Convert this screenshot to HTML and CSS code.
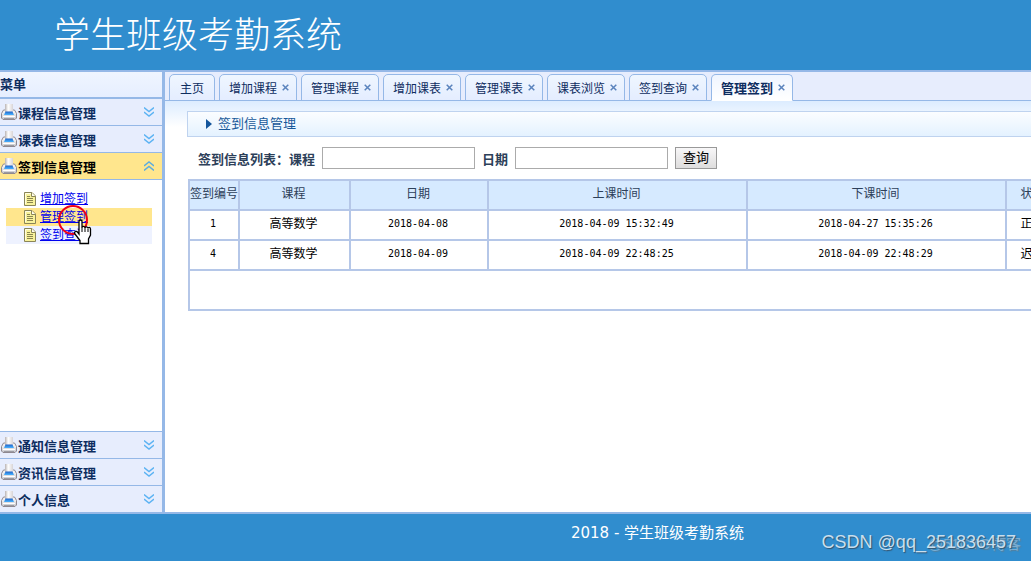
FILE: index.html
```html
<!DOCTYPE html>
<html lang="zh-CN">
<head>
<meta charset="utf-8">
<title>学生班级考勤系统</title>
<link rel="stylesheet" href="styles.css">
</head>
<body>
<svg class="defs" aria-hidden="true">
  <defs>
    <linearGradient id="paper" x1="0" y1="0" x2="1" y2="0"><stop offset="0" stop-color="#b9b3b3"/><stop offset=".4" stop-color="#fff"/><stop offset="1" stop-color="#d8d4d6"/></linearGradient>
    <linearGradient id="tray" x1="0" y1="0" x2="0" y2="1"><stop offset="0" stop-color="#1f62c8"/><stop offset="1" stop-color="#49b4ff"/></linearGradient>
    <linearGradient id="case" x1="0" y1="0" x2="0" y2="1"><stop offset="0" stop-color="#fff"/><stop offset="1" stop-color="#c6c6cc"/></linearGradient>
    <symbol id="printer" viewBox="0 0 16 16">
      <path d="M2.500 6l-2 3.500v4.500l1.500 1.500h12l1.500-1.500V9.500L13.500 6z" fill="url(#case)" stroke="#8e8890"/>
      <path d="M4 0h8v8H4z" fill="url(#paper)"/>
      <path d="M4.500 7.500h7L13 11H3z" fill="url(#tray)"/>
      <path d="M2 12.500h12" stroke="#fff"/>
      <path d="M3 14.500h10" stroke="#9b9ba2"/>
    </symbol>
    <symbol id="down" viewBox="0 0 10 10"><path d="M0 .5l5 4 5-4M0 5l5 4 5-4" fill="none" stroke="#5cb3f3" stroke-width="1.400"/></symbol>
    <symbol id="up" viewBox="0 0 10 10"><path d="M0 5l5-4 5 4M0 9.500l5-4 5 4" fill="none" stroke="#5cace0" stroke-width="1.400"/></symbol>
    <symbol id="note" viewBox="0 0 12 14">
      <path d="M.5.5h7.500l3.500 3.500v9.500H.5z" fill="#f8f29a" stroke="#8a8558"/>
      <path d="M1.500 12V1.500H7" fill="none" stroke="#fffde0"/>
      <path d="M7.500.5v4h4" fill="#fffef0" stroke="#8a8558"/>
      <path d="M3 4.500h3M3 6.500h6M3 8.500h6M3 10.500h6" stroke="#8a8550"/>
    </symbol>
    <symbol id="cross" viewBox="0 0 7 7"><path d="M.7.7l5.600 5.600M6.300.7L.7 6.300" stroke="#5a83bd" stroke-width="1.500"/></symbol>
  </defs>
</svg>
<div class="app">
  <header class="header"><h1 class="brand">学生班级考勤系统</h1></header>
  <div class="middle">
    <aside class="sidebar">
      <h2 class="side-title">菜单</h2>
      <button class="group"><svg class="printer"><use href="#printer"/></svg><span class="group-name">课程信息管理</span><svg class="chevron"><use href="#down"/></svg></button>
      <button class="group"><svg class="printer"><use href="#printer"/></svg><span class="group-name">课表信息管理</span><svg class="chevron"><use href="#down"/></svg></button>
      <button class="group open"><svg class="printer"><use href="#printer"/></svg><span class="group-name">签到信息管理</span><svg class="chevron"><use href="#up"/></svg></button>
      <ul class="submenu">
        <li class="sub"><svg class="note"><use href="#note"/></svg><a href="#add">增加签到</a></li>
        <li class="sub active"><svg class="note"><use href="#note"/></svg><a href="#manage">管理签到</a></li>
        <li class="sub alt"><svg class="note"><use href="#note"/></svg><a href="#query">签到查询</a></li>
      </ul>
      <div class="lower">
        <button class="group"><svg class="printer"><use href="#printer"/></svg><span class="group-name">通知信息管理</span><svg class="chevron"><use href="#down"/></svg></button>
        <button class="group"><svg class="printer"><use href="#printer"/></svg><span class="group-name">资讯信息管理</span><svg class="chevron"><use href="#down"/></svg></button>
        <button class="group"><svg class="printer"><use href="#printer"/></svg><span class="group-name">个人信息</span><svg class="chevron"><use href="#down"/></svg></button>
      </div>
    </aside>
    <main class="main">
      <nav class="tabs">
        <button class="tab">主页</button>
        <button class="tab">增加课程<svg class="cross"><use href="#cross"/></svg></button>
        <button class="tab">管理课程<svg class="cross"><use href="#cross"/></svg></button>
        <button class="tab">增加课表<svg class="cross"><use href="#cross"/></svg></button>
        <button class="tab">管理课表<svg class="cross"><use href="#cross"/></svg></button>
        <button class="tab">课表浏览<svg class="cross"><use href="#cross"/></svg></button>
        <button class="tab">签到查询<svg class="cross"><use href="#cross"/></svg></button>
        <button class="tab current">管理签到<svg class="cross"><use href="#cross"/></svg></button>
      </nav>
      <section class="page">
        <h2 class="page-title"><svg class="arrow" viewBox="0 0 6 10"><path d="M0 0l6 5-6 5z" fill="#14569c"/></svg>签到信息管理</h2>
        <form class="search">
          <label for="course">签到信息列表：课程</label>
          <input class="field" id="course" type="text">
          <label for="date">日期</label>
          <input class="field" id="date" type="text">
          <button class="submit" type="button">查询</button>
        </form>
        <table class="records">
          <colgroup><col class="c-id"><col class="c-course"><col class="c-date"><col class="c-time"><col class="c-time"><col class="c-state"></colgroup>
          <thead>
            <tr><th>签到编号</th><th>课程</th><th>日期</th><th>上课时间</th><th>下课时间</th><th>状态</th></tr>
          </thead>
          <tbody>
            <tr><td class="num">1</td><td>高等数学</td><td class="num">2018-04-08</td><td class="num">2018-04-09 15:32:49</td><td class="num">2018-04-27 15:35:26</td><td>正常</td></tr>
            <tr><td class="num">4</td><td>高等数学</td><td class="num">2018-04-09</td><td class="num">2018-04-09 22:48:25</td><td class="num">2018-04-09 22:48:29</td><td>迟到</td></tr>
            <tr class="pager"><td colspan="6"></td></tr>
          </tbody>
        </table>
      </section>
    </main>
  </div>
  <footer class="footer">
    <p class="copyright">2018 - 学生班级考勤系统</p>
    <span class="mark-back">@51CTO博客</span>
    <span class="mark">CSDN @qq_251836457</span>
  </footer>
  <svg class="pointer" viewBox="0 0 36 42" aria-hidden="true">
    <circle cx="16" cy="15" r="14" fill="none" stroke="#f00014" stroke-width="2"/>
    <path d="M22 16.500c0-2 3-2 3 0v6c0-1.500 3-1.500 3 .5 0-1.500 3-1.500 3 .5 0-1.500 2.500-1.500 2.500.5v6l-2 4v4.500h-8.500v-3l-5-6.500c-1.500-2 1-3.500 2.500-2l1.500 2z" fill="#fff" stroke="#000" stroke-width="1.300"/>
    <path d="M25 22v5M28 23v4M31 24v3" stroke="#000"/>
  </svg>
</div>
</body>
</html>
```
FILE: styles.css
```css
* { box-sizing: border-box; }
body { margin: 0; font-family: "Liberation Sans", "Noto Sans CJK SC", sans-serif; font-size: 12px; color: #000; }
h1, h2, p, ul { margin: 0; padding: 0; }
button { font-family: inherit; cursor: pointer; }
.defs { position: absolute; width: 0; height: 0; }
.app { position: relative; display: flex; flex-direction: column; height: 100vh; overflow: hidden; }

.header { flex: none; height: 70px; padding-left: 54px; background: #308dce; }
.brand { font-size: 36px; line-height: 64px; font-weight: 300; font-family: "Noto Sans CJK SC", sans-serif; color: #fff; }

.middle { flex: 1; display: flex; min-height: 0; border-top: 2px solid #95b8e7; border-bottom: 2px solid #95b8e7; }

.sidebar { flex: none; display: flex; flex-direction: column; width: 165px; border-right: 3px solid #95b8e7; background: #fff; }
.side-title { height: 27px; border-bottom: 2px solid #95b8e7; background: linear-gradient(#eff5ff, #e6eeff); font-size: 13px; line-height: 26px; color: #0e2d5f; }
.group { flex: none; display: flex; align-items: center; width: 100%; height: 27px; padding: 0 8px 0 1px; border: 0; border-bottom: 1px solid #95b8e7; background: #e7edfd; color: #0e2d5f; font-size: 13px; font-weight: 700; text-align: left; }
.group.open { background: #ffe68d; color: #000; }
.group-name { flex: 1; padding-left: 1px; }
.printer { width: 16px; height: 16px; }
.chevron { width: 10px; height: 10px; }
.submenu { list-style: none; padding: 10px 10px 0 6px; }
.sub { display: flex; align-items: center; gap: 4px; height: 18px; padding-left: 18px; line-height: 20px; }
.sub a { color: #00e; }
.sub.active { background: #ffe68d; }
.sub.alt { background: #eef2ff; }
.note { width: 12px; height: 14px; }
.lower { margin-top: auto; border-top: 1px solid #95b8e7; }
.lower .group:last-child { height: 26px; border-bottom: 0; }

.main { flex: 1; min-width: 0; display: flex; flex-direction: column; overflow: hidden; background: #fff; }
.tabs { flex: none; display: flex; gap: 4px; height: 29px; padding: 2px 0 0 4px; border-bottom: 1px solid #95b8e7; background: #e7edfd; }
.tab { flex: none; display: flex; align-items: center; gap: 5px; height: 27px; padding: 0 7px 0 9px; border: 1px solid #95b8e7; border-radius: 5px 5px 0 0; background: linear-gradient(#eff6ff, #e4edff); color: #0e2d5f; font-size: 12px; white-space: nowrap; }
.tab:first-child { padding: 0 10px; }
.tab.current { border-bottom-color: #fff; background: linear-gradient(#eff5ff, #fff); font-size: 13px; font-weight: 700; padding: 0 7px 0 9px; }
.cross { width: 7px; height: 7px; }

.page { flex: 1; padding: 10px 0 0 22px; background: linear-gradient(#dcecff, #fff 26px); }
.page-title { display: flex; align-items: center; gap: 6px; height: 26px; padding-left: 18px; border: 1px solid #bfd3ef; border-right: 0; background: linear-gradient(#fbfdff, #e4f2ff); color: #18599a; font-size: 13px; line-height: 20px; font-weight: 400; }
.arrow { width: 6px; height: 10px; }
.search { display: flex; align-items: center; gap: 7px; height: 42px; padding-left: 11px; color: #2d4059; font-size: 13px; font-weight: 700; }
.field { width: 153px; height: 22px; padding: 2px; border: 1px solid #ababab; background: #fff; font-size: 13px; }
.submit { width: 42px; height: 22px; padding: 0; border: 1px solid #999; background: linear-gradient(#f8f7f8, #dedddd); color: #000; font-size: 13px; line-height: 18px; }

.records { width: 872px; margin-left: 1px; table-layout: fixed; border-collapse: collapse; background: #fff; }
.records th, .records td { height: 30px; padding: 0 2px 3px 0; border: 2px solid #b5c7e8; text-align: center; font-weight: 400; line-height: 16px; white-space: nowrap; }
.records th { background: #d6eaff; color: #2d4059; }
.records .num { font-family: "DejaVu Sans Mono", monospace; font-size: 10px; }
.records .pager td { height: 40px; }
.c-id { width: 50px; }
.c-course { width: 111px; }
.c-date { width: 138px; }
.c-time { width: 259px; }
.c-state { width: 55px; }

.footer { position: relative; flex: none; height: 47px; padding-left: 284px; background: #308dce; color: #fff; }
.copyright { font-family: "DejaVu Sans", "Noto Sans CJK SC", sans-serif; font-size: 15px; line-height: 38px; text-align: center; }
.mark, .mark-back { position: absolute; white-space: nowrap; }
.mark { right: 15px; top: 17px; font-family: "Liberation Sans", sans-serif; font-size: 18px; line-height: 22px; color: #c9dfee; text-shadow: 1px 1px 1px #30546f; }
.mark-back { right: 10px; top: 20px; font-size: 15px; line-height: 20px; color: #7aaed3; text-shadow: 1px 1px 1px #55809d; }

.pointer { position: absolute; left: 57px; top: 205px; width: 36px; height: 42px; pointer-events: none; }
```
